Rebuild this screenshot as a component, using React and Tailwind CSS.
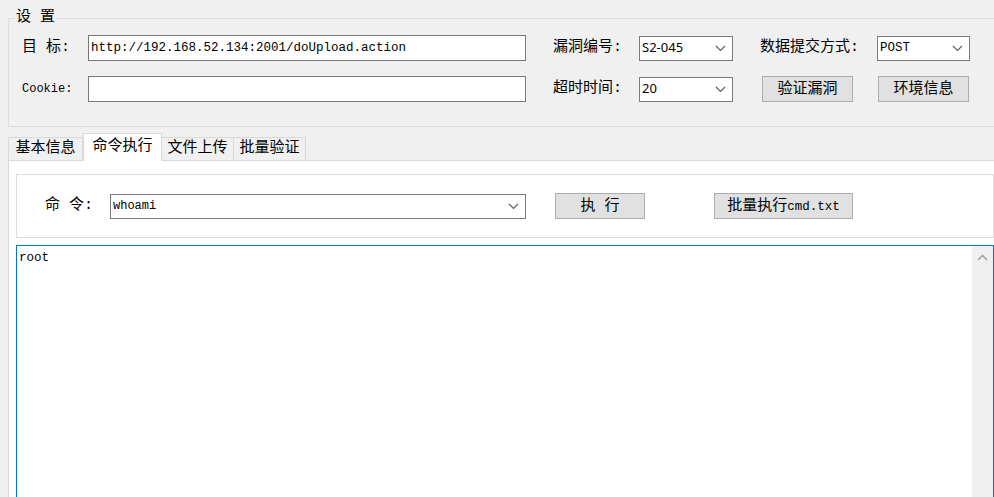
const cjk = "font-['Liberation_Mono','Noto_Sans_CJK_SC',monospace]";

function Chevron({ className = "" }) {
  return (
    <svg width="11" height="7" viewBox="0 0 11 7" className={className}>
      <polyline points="1,1 5.5,5.5 10,1" fill="none" stroke="#606060" strokeWidth="1.2" />
    </svg>
  );
}

function Select({ value, width, mono }) {
  return (
    <div className={`flex items-center justify-between h-[25px] border border-[#7a7a7a] bg-white pl-[2px] pr-[6px] ${width}`}>
      <span className={mono ? "text-[12.5px] font-['Liberation_Mono',monospace]" : "text-[13px] font-['Noto_Sans',sans-serif]"}>{value}</span>
      <Chevron />
    </div>
  );
}

function Button({ children, width }) {
  return (
    <button className={`h-[26px] border border-[#adadad] bg-[#e1e1e1] text-[15px] leading-none ${width}`}>
      {children}
    </button>
  );
}

export default function App() {
  return (
    <div className={`w-[994px] h-[497px] overflow-hidden bg-[#f0f0f0] text-black ${cjk}`}>
      {/* settings */}
      <fieldset className="ml-[8px] mt-[8px] w-[1000px] border border-[#dcdcdc] pl-[13px] pt-[7px] pb-[24px]">
        <legend className="-ml-[7px] px-[1px] text-[15px] leading-[20px]">设 置</legend>
        <div className="flex items-center h-[26px]">
          <span className="w-[66px] text-[15px]">目 标:</span>
          <input
            readOnly
            value="http://192.168.52.134:2001/doUpload.action"
            className="w-[438px] h-[26px] border border-[#7a7a7a] bg-white px-[2px] text-[12.5px] font-['Liberation_Mono',monospace] outline-none"
          />
          <span className="ml-[27px] w-[86px] text-[15px]">漏洞编号:</span>
          <Select value="S2-045" width="w-[94px]" />
          <span className="ml-[27px] w-[117px] text-[15px]">数据提交方式:</span>
          <Select value="POST" width="w-[93px]" mono />
        </div>
        <div className="flex items-center h-[26px] mt-[15px]">
          <span className="w-[66px] text-[12px] font-['Liberation_Mono',monospace]">Cookie:</span>
          <input
            readOnly
            value=""
            className="w-[438px] h-[26px] border border-[#7a7a7a] bg-white px-[2px] text-[12.5px] outline-none"
          />
          <span className="ml-[27px] w-[86px] text-[15px]">超时时间:</span>
          <Select value="20" width="w-[94px]" />
          <div className="ml-[29px]">
            <Button width="w-[91px]">验证漏洞</Button>
          </div>
          <div className="ml-[25px]">
            <Button width="w-[91px]">环境信息</Button>
          </div>
        </div>
      </fieldset>

      {/* tabs */}
      <div className="flex items-end ml-[8px] mt-[6px] text-[15px]">
        <div className="w-[75px] h-[23px] border border-b-0 border-[#d9d9d9] bg-[#f0f0f0] flex items-center justify-center">基本信息</div>
        <div className="relative z-10 -mb-[1px] w-[79px] h-[28px] border border-b-0 border-[#d9d9d9] bg-white flex items-start justify-center pt-[2px]">命令执行</div>
        <div className="w-[72px] h-[23px] border border-b-0 border-l-0 border-[#d9d9d9] bg-[#f0f0f0] flex items-center justify-center">文件上传</div>
        <div className="w-[72px] h-[23px] border border-b-0 border-l-0 border-[#d9d9d9] bg-[#f0f0f0] flex items-center justify-center">批量验证</div>
      </div>

      <div className="ml-[8px] w-[1000px] h-[400px] border border-[#d9d9d9] bg-white pl-[7px] pt-[13px]">
        <div className="w-[978px] h-[64px] border border-[#dcdcdc] flex items-center pl-[28px]">
          <span className="w-[65px] text-[15px]">命 令:</span>
          <div className="flex items-center justify-between w-[416px] h-[25px] border border-[#7a7a7a] bg-white pl-[2px] pr-[6px]">
            <span className="text-[12px] font-['Liberation_Mono',monospace]">whoami</span>
            <Chevron />
          </div>
          <div className="ml-[29px]">
            <Button width="w-[90px]">执 行</Button>
          </div>
          <div className="ml-[69px]">
            <Button width="w-[139px]">
              批量执行<span className="text-[12.5px]">cmd.txt</span>
            </Button>
          </div>
        </div>
        <div className="mt-[7px] w-[978px] h-[300px] border border-[#0078d7] flex">
          <div className="flex-1 pl-[2px] pt-[3px] text-[12.5px] font-['Liberation_Mono',monospace] leading-[18px]">root</div>
          <div className="w-[21px] bg-[#f0f0f0] flex justify-center pt-[8px]">
            <svg width="11" height="7" viewBox="0 0 11 7">
              <polyline points="1,6 5.5,1.5 10,6" fill="none" stroke="#a3a3a3" strokeWidth="1.6" />
            </svg>
          </div>
        </div>
      </div>
    </div>
  );
}
